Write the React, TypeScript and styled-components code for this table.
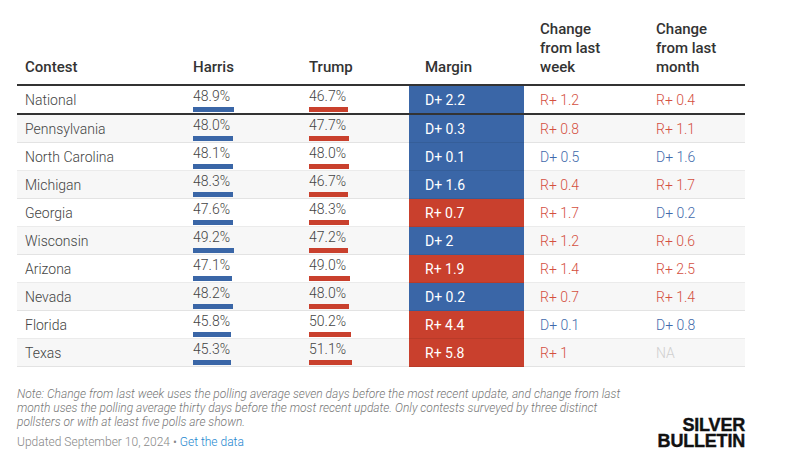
import * as React from 'react'
import styled, {createGlobalStyle} from 'styled-components'

type Party = 'D' | 'R'

interface Contest {
  name: string
  harris: number
  trump: number
  margin: string
  marginParty: Party
  week: string
  month: string
}

const contests: Contest[] = [
  {name: 'National', harris: 48.9, trump: 46.7, margin: 'D+ 2.2', marginParty: 'D', week: 'R+ 1.2', month: 'R+ 0.4'},
  {name: 'Pennsylvania', harris: 48.0, trump: 47.7, margin: 'D+ 0.3', marginParty: 'D', week: 'R+ 0.8', month: 'R+ 1.1'},
  {name: 'North Carolina', harris: 48.1, trump: 48.0, margin: 'D+ 0.1', marginParty: 'D', week: 'D+ 0.5', month: 'D+ 1.6'},
  {name: 'Michigan', harris: 48.3, trump: 46.7, margin: 'D+ 1.6', marginParty: 'D', week: 'R+ 0.4', month: 'R+ 1.7'},
  {name: 'Georgia', harris: 47.6, trump: 48.3, margin: 'R+ 0.7', marginParty: 'R', week: 'R+ 1.7', month: 'D+ 0.2'},
  {name: 'Wisconsin', harris: 49.2, trump: 47.2, margin: 'D+ 2', marginParty: 'D', week: 'R+ 1.2', month: 'R+ 0.6'},
  {name: 'Arizona', harris: 47.1, trump: 49.0, margin: 'R+ 1.9', marginParty: 'R', week: 'R+ 1.4', month: 'R+ 2.5'},
  {name: 'Nevada', harris: 48.2, trump: 48.0, margin: 'D+ 0.2', marginParty: 'D', week: 'R+ 0.7', month: 'R+ 1.4'},
  {name: 'Florida', harris: 45.8, trump: 50.2, margin: 'R+ 4.4', marginParty: 'R', week: 'D+ 0.1', month: 'D+ 0.8'},
  {name: 'Texas', harris: 45.3, trump: 51.1, margin: 'R+ 5.8', marginParty: 'R', week: 'R+ 1', month: 'NA'},
]

const BLUE = '#3a66a7'
const RED = '#c9402d'

const GlobalStyle = createGlobalStyle`
  html, body {
    margin: 0;
    padding: 0;
    background: #fff;
  }
  body {
    font-family: Roboto, 'Liberation Sans', sans-serif;
    color: #333;
  }
`

const Page = styled.div`
  width: 787px;
  height: 471px;
  box-sizing: border-box;
  padding: 20px 42px 0 17px;
`

const Table = styled.table`
  width: 728px;
  border-collapse: collapse;
  table-layout: fixed;
  font-size: 14px;
`

const HeadCell = styled.th<{$w: number; $pl: number; $pr: number}>`
  width: ${p => p.$w}px;
  box-sizing: border-box;
  padding: 0 ${p => p.$pr}px 7px ${p => p.$pl}px;
  text-align: left;
  vertical-align: bottom;
  font-size: 15px;
  font-weight: 500;
  line-height: 19px;
  color: #333;
  border-bottom: 2px solid #333;
`

const Row = styled.tr<{$striped: boolean; $first: boolean}>`
  background: ${p => (p.$striped ? '#f7f7f7' : '#fff')};
  & > td {
    border-bottom: ${p => (p.$first ? '2px solid #333' : '1px solid rgba(0, 0, 0, 0.08)')};
  }
`

const Cell = styled.td`
  padding: 0 8px;
  vertical-align: middle;
  font-weight: 300;
  color: #444;
  white-space: nowrap;
`

const ShareCell = styled.td`
  padding: 2px 8px 1px 8px;
  vertical-align: top;
  font-weight: 300;
  color: #444;
`

const ShareValue = styled.div`
  line-height: 16px;
`

const Bar = styled.div<{$party: Party}>`
  height: 5px;
  margin-top: 3px;
  background: ${p => (p.$party === 'D' ? BLUE : RED)};
`

const MarginCell = styled.td<{$party: Party}>`
  padding: 0 8px 0 16px;
  vertical-align: middle;
  background: ${p => (p.$party === 'D' ? BLUE : RED)};
  color: #fff;
  font-weight: 400;
`

const ChangeCell = styled.td<{$tone: Party | 'NA'}>`
  padding: 0 8px 0 16px;
  vertical-align: middle;
  font-weight: 300;
  color: ${p => (p.$tone === 'D' ? '#3f6aab' : p.$tone === 'R' ? '#d4503f' : '#cfcfcf')};
`

const Footer = styled.div`
  display: flex;
  align-items: flex-end;
  justify-content: space-between;
  width: 728px;
  margin-top: 20px;
`

const Notes = styled.div`
  width: 624px;
`

const Note = styled.p`
  margin: 0;
  font-size: 12px;
  line-height: 14px;
  font-style: italic;
  font-weight: 300;
  color: #777;
`

const Byline = styled.p`
  margin: 5px 0 0;
  font-size: 12px;
  line-height: 16px;
  font-weight: 300;
  color: #888;
`

const DataLink = styled.a`
  color: #1d87cf;
  text-decoration: none;
`

const Logo = styled.div`
  margin-bottom: 1px;
  font-family: 'Liberation Sans', Arial, sans-serif;
  font-weight: 700;
  font-size: 18px;
  line-height: 16px;
  letter-spacing: -0.2px;
  text-align: right;
  color: #111;
  -webkit-text-stroke: 0.4px #111;
`

const toneOf = (v: string): Party | 'NA' => (v.startsWith('D') ? 'D' : v.startsWith('R') ? 'R' : 'NA')

const barWidth = (share: number) => `${(share * 0.835).toFixed(1)}px`

const columns = [
  {label: 'Contest', w: 168, pl: 8, pr: 8},
  {label: 'Harris', w: 116, pl: 8, pr: 8},
  {label: 'Trump', w: 108, pl: 8, pr: 8},
  {label: 'Margin', w: 115, pl: 16, pr: 8},
  {label: 'Change from last week', w: 116, pl: 16, pr: 26},
  {label: 'Change from last month', w: 105, pl: 16, pr: 8},
]

export default function App() {
  return (
    <Page>
      <GlobalStyle />
      <Table>
        <thead>
          <tr>
            {columns.map(c => (
              <HeadCell key={c.label} $w={c.w} $pl={c.pl} $pr={c.pr}>{c.label}</HeadCell>
            ))}
          </tr>
        </thead>
        <tbody>
          {contests.map((c, i) => (
            <Row key={c.name} $first={i === 0} $striped={i % 2 === 1}>
              <Cell>{c.name}</Cell>
              <ShareCell>
                <ShareValue>{c.harris.toFixed(1)}%</ShareValue>
                <Bar $party='D' style={{width: barWidth(c.harris)}} />
              </ShareCell>
              <ShareCell>
                <ShareValue>{c.trump.toFixed(1)}%</ShareValue>
                <Bar $party='R' style={{width: barWidth(c.trump)}} />
              </ShareCell>
              <MarginCell $party={c.marginParty}>{c.margin}</MarginCell>
              <ChangeCell $tone={toneOf(c.week)}>{c.week}</ChangeCell>
              <ChangeCell $tone={toneOf(c.month)}>{c.month}</ChangeCell>
            </Row>
          ))}
        </tbody>
      </Table>
      <Footer>
        <Notes>
          <Note>
            Note: Change from last week uses the polling average seven days before the most recent update, and change
            from last month uses the polling average thirty days before the most recent update. Only contests surveyed
            by three distinct pollsters or with at least five polls are shown.
          </Note>
          <Byline>
            Updated September 10, 2024 • <DataLink href='#'>Get the data</DataLink>
          </Byline>
        </Notes>
        <Logo>
          SILVER
          <br />
          BULLETIN
        </Logo>
      </Footer>
    </Page>
  )
}
